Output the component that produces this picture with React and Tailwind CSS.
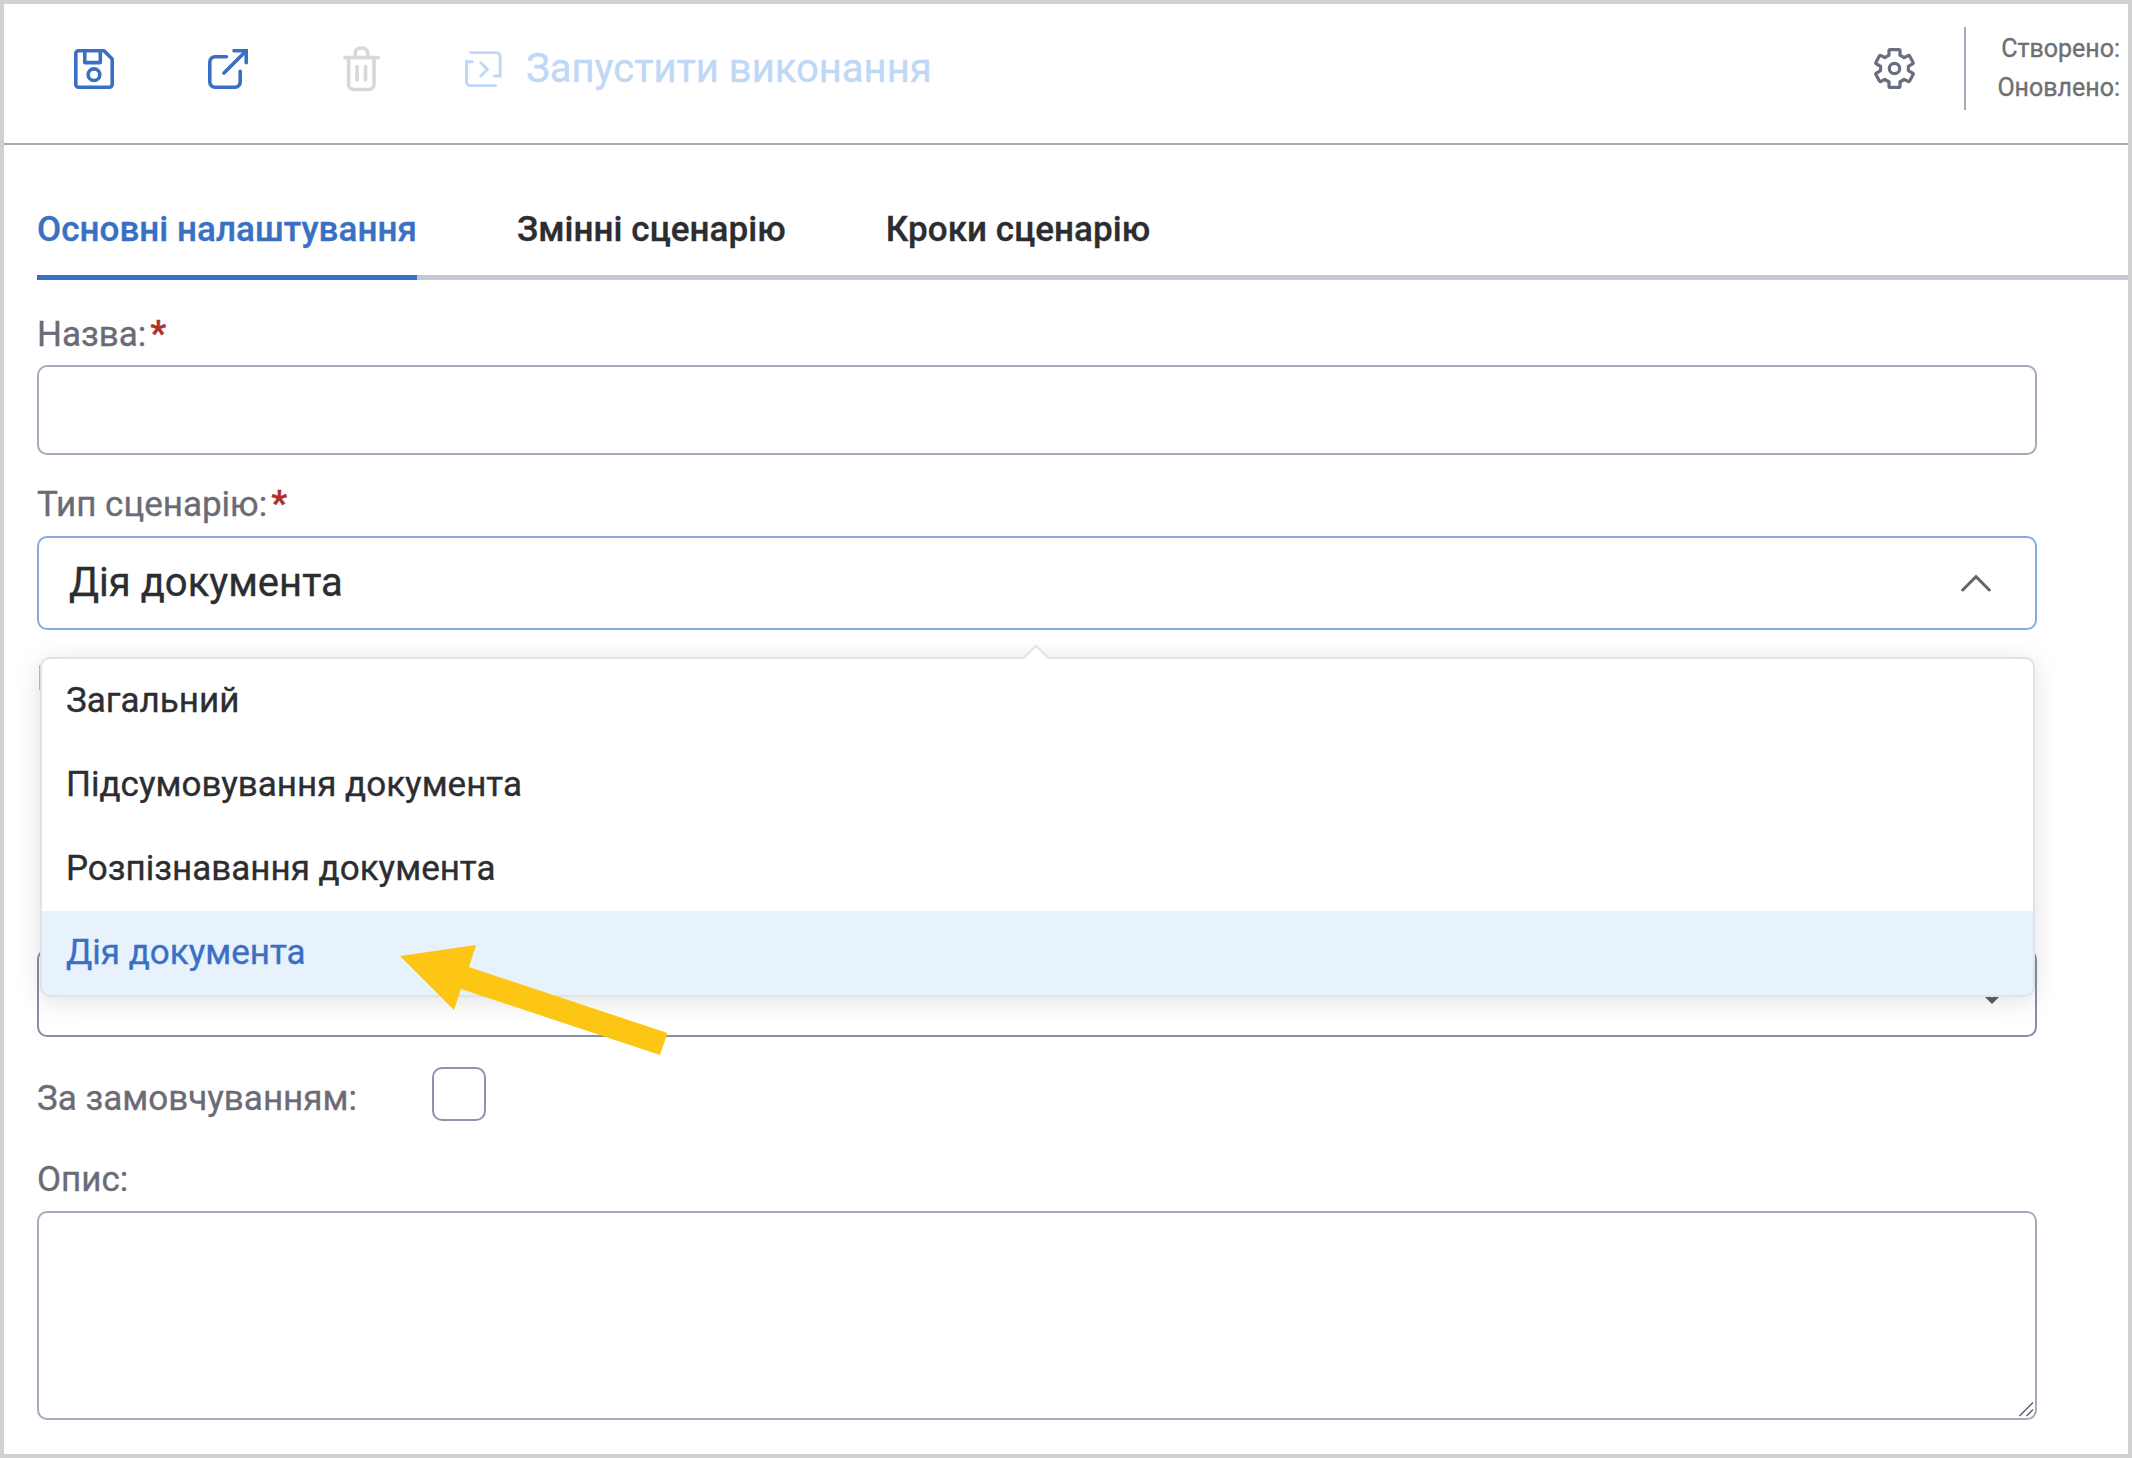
import React from "react";

const SaveIcon = () => (
  <svg className="h-10 w-10" viewBox="0 0 40 40" fill="none" stroke="currentColor" strokeWidth="3.6" strokeLinejoin="round">
    <path d="M4.6 1.8H30L38.2 10V35.4a2.8 2.8 0 0 1-2.8 2.8H4.6a2.8 2.8 0 0 1-2.8-2.8V4.6a2.8 2.8 0 0 1 2.8-2.8Z" />
    <path d="M10.8 2V13.6H26.3V2" />
    <circle cx="20" cy="25.7" r="5.8" />
  </svg>
);

const OpenIcon = () => (
  <svg className="h-10 w-10" viewBox="0 0 40 40" fill="none" stroke="currentColor" strokeWidth="3.6" strokeLinecap="round">
    <path d="M18.4 7.7H7a5.2 5.2 0 0 0-5.2 5.2V33A5.2 5.2 0 0 0 7 38.2H27A5.2 5.2 0 0 0 32.2 33V22.2" />
    <path d="M26 1.8H38.2V13.8" />
    <path d="M37.5 2.5L16 24" />
  </svg>
);

const TrashIcon = () => (
  <svg className="h-[46px] w-[37px]" viewBox="0 0 37 46" fill="none" stroke="currentColor" strokeWidth="3.6" strokeLinecap="round">
    <path d="M1.8 11.6H35.2" />
    <path d="M12.2 11V7.5a5.5 5.5 0 0 1 5.5-5.5h1.6a5.5 5.5 0 0 1 5.5 5.5V11" />
    <path d="M5.6 12V38.5a5 5 0 0 0 5 5H26a5 5 0 0 0 5-5V12" />
    <path d="M14.1 20.5V34M22.5 20.5V34" />
  </svg>
);

const RunIcon = () => (
  <svg className="h-9 w-[37px]" viewBox="0 0 37 36" fill="none" stroke="currentColor" strokeWidth="2.9" strokeLinecap="round">
    <path d="M5.5 1.6H31.2a4 4 0 0 1 4 4V25H29.5" />
    <path d="M7.4 10.8H1.5V30.6a4 4 0 0 0 4 4H30.5" />
    <path d="M15.8 11.8L22.4 18.4L15.8 25" strokeLinejoin="round" />
  </svg>
);

const GearIcon = () => (
  <svg className="h-[41px] w-[41px]" viewBox="0 0 41 41" fill="none" stroke="currentColor" strokeWidth="3.2" strokeLinejoin="round">
    <path d="M16.2 1.6H24.8Q26 1.6 26 2.8V7.2Q28.3 8 30.2 9.7L34 7.6Q35 7 35.6 8L39 14.2Q39.6 15.2 38.6 15.9L34.4 18.4V22.6L38.6 25.1Q39.6 25.8 39 26.8L35.6 33Q35 34 34 33.4L30.2 31.3Q28.3 33 26 33.8V38.2Q26 39.4 24.8 39.4H16.2Q15 39.4 15 38.2V33.8Q12.7 33 10.8 31.3L7 33.4Q6 34 5.4 33L2 26.8Q1.4 25.8 2.4 25.1L6.6 22.6V18.4L2.4 15.9Q1.4 15.2 2 14.2L5.4 8Q6 7 7 7.6L10.8 9.7Q12.7 8 15 7.2V2.8Q15 1.6 16.2 1.6Z" />
    <circle cx="20.5" cy="20.5" r="5.2" />
  </svg>
);

const Label = ({ children, required }) => (
  <div className="flex h-11 text-[35px] leading-[45px] text-[#6b6b76]">
    <span>{children}</span>
    {required && <span className="-mt-px ml-1 font-bold text-[#b0302c]">*</span>}
  </div>
);

const options = ["Загальний", "Підсумовування документа", "Розпізнавання документа", "Дія документа"];

const Dropdown = () => (
  <div className="absolute top-[119px] left-px z-10 w-[1995px] rounded-[10px] border-2 border-[#e0e2e6] bg-white shadow-[0_4px_26px_rgba(0,0,0,0.12)]">
    <svg className="absolute -top-[15px] left-[980px] h-[16px] w-[28px]" viewBox="0 0 28 16">
      <path d="M1 16V15L14 2L27 15V16Z" fill="#fff" />
      <path d="M1.5 14L14 1.8L26.5 14" fill="none" stroke="#e2e2e4" strokeWidth="2" />
    </svg>
    <ul className="overflow-hidden rounded-b-lg">
      {options.map((o, i) => (
        <li
          key={o}
          className={
            i === 3
              ? "h-[84px] bg-[#e8f2fc] pl-6 text-[35px] leading-[84px] text-[#3a70c3]"
              : "h-[84px] pl-6 text-[35px] leading-[84px] text-[#2c2d30]"
          }
        >
          {o}
        </li>
      ))}
    </ul>
  </div>
);

export default function App() {
  return (
    <div className="relative flex h-[1458px] w-[2132px] flex-col overflow-hidden border-4 border-[#d1d1d1] bg-white font-['Roboto',sans-serif] [-webkit-text-stroke:0.35px]">
      <header className="flex h-[141px] shrink-0 border-b-2 border-[#a9a9ae] pr-2 pl-[70px]">
        <div className="flex h-[130px] items-center text-[#3a70c3]">
          <SaveIcon />
          <span className="ml-[94px]"><OpenIcon /></span>
          <span className="ml-[95px] text-[#d7d8db]"><TrashIcon /></span>
          <button className="ml-[85px] flex items-center text-[#bfd8f5]">
            <RunIcon />
            <span className="ml-6 text-[40px] leading-[48px]">Запустити виконання</span>
          </button>
        </div>
        <div className="ml-auto flex h-[129px] items-center">
          <span className="text-[#686d7f]"><GearIcon /></span>
          <div className="ml-[49px] h-[83px] w-0.5 bg-[#a9a9bb]" />
          <div className="-mt-0.5 ml-[31px] text-right text-[25px] leading-[39px] text-[#6f7075]">
            <div>Створено:</div>
            <div>Оновлено:</div>
          </div>
        </div>
      </header>

      <nav className="ml-[33px] flex h-[135px] shrink-0 gap-[100px] border-b-[5px] border-[#c3c8d6] pt-[62px] text-[35px] leading-[45px] font-medium tracking-[0.05px] text-[#2c2d30]">
        <div className="-mb-[5px] border-b-[5px] border-[#3a70c3] text-[#3a70c3]">Основні налаштування</div>
        <div>Змінні сценарію</div>
        <div>Кроки сценарію</div>
      </nav>

      <main className="ml-[33px] flex w-[2000px] flex-col pt-8">
        <Label required>Назва:</Label>
        <input className="mt-[9px] h-[90px] rounded-[10px] border-2 border-[#a9a9bb] px-8 text-[40px] outline-none" />

        <div className="mt-[27px]"><Label required>Тип сценарію:</Label></div>
        <div className="relative mt-[10px] flex h-[94px] items-center justify-between rounded-[10px] border-2 border-[#82aede] pr-[43px] pl-[30px]">
          <span className="text-[40px] leading-[90px] text-[#2c2d30]">Дія документа</span>
          <svg className="h-[18px] w-[32px]" viewBox="0 0 32 18" fill="none" stroke="#66676b" strokeWidth="3" strokeLinecap="round">
            <path d="M2.7 16L16 2.7L29.3 16" />
          </svg>
          <Dropdown />
        </div>

        <div className="mt-[35px] ml-0.5 h-[25px] w-px bg-[#bcbcbc]" />

        <div className="mt-[259px] flex h-[88px] items-end justify-end rounded-[10px] border-2 border-[#858fa6] pr-[30px] pb-[31px]">
          <svg className="h-[16px] w-[26px]" viewBox="0 0 26 16" fill="none" stroke="#5d5e62" strokeWidth="4.4">
            <path d="M1 0.9L13 12.9L25 0.9" />
          </svg>
        </div>

        <div className="mt-[30px] flex h-[54px] items-start">
          <div className="w-[395px] pt-[9px]"><Label>За замовчуванням:</Label></div>
          <div className="h-[54px] w-[54px] rounded-[10px] border-2 border-[#8f94ac]" />
        </div>

        <div className="mt-[36px]"><Label>Опис:</Label></div>
        <div className="mt-[10px] flex h-[209px] items-end justify-end rounded-[10px] border-2 border-[#a9a9bb] pr-px pb-px">
          <svg className="h-4 w-4" viewBox="0 0 16 16" stroke="#626262" strokeWidth="1.5">
            <path d="M1.5 15L15 1.5M8.5 15L15 8.5" />
          </svg>
        </div>
      </main>

      <svg className="absolute top-[940px] left-[394px] z-20 h-[112px] w-[270px]" viewBox="398 944 270 112">
        <path d="M400 956L476 945L469 967L667.5 1033L660 1055L461 989L454 1010Z" fill="#fdc514" />
      </svg>
    </div>
  );
}
